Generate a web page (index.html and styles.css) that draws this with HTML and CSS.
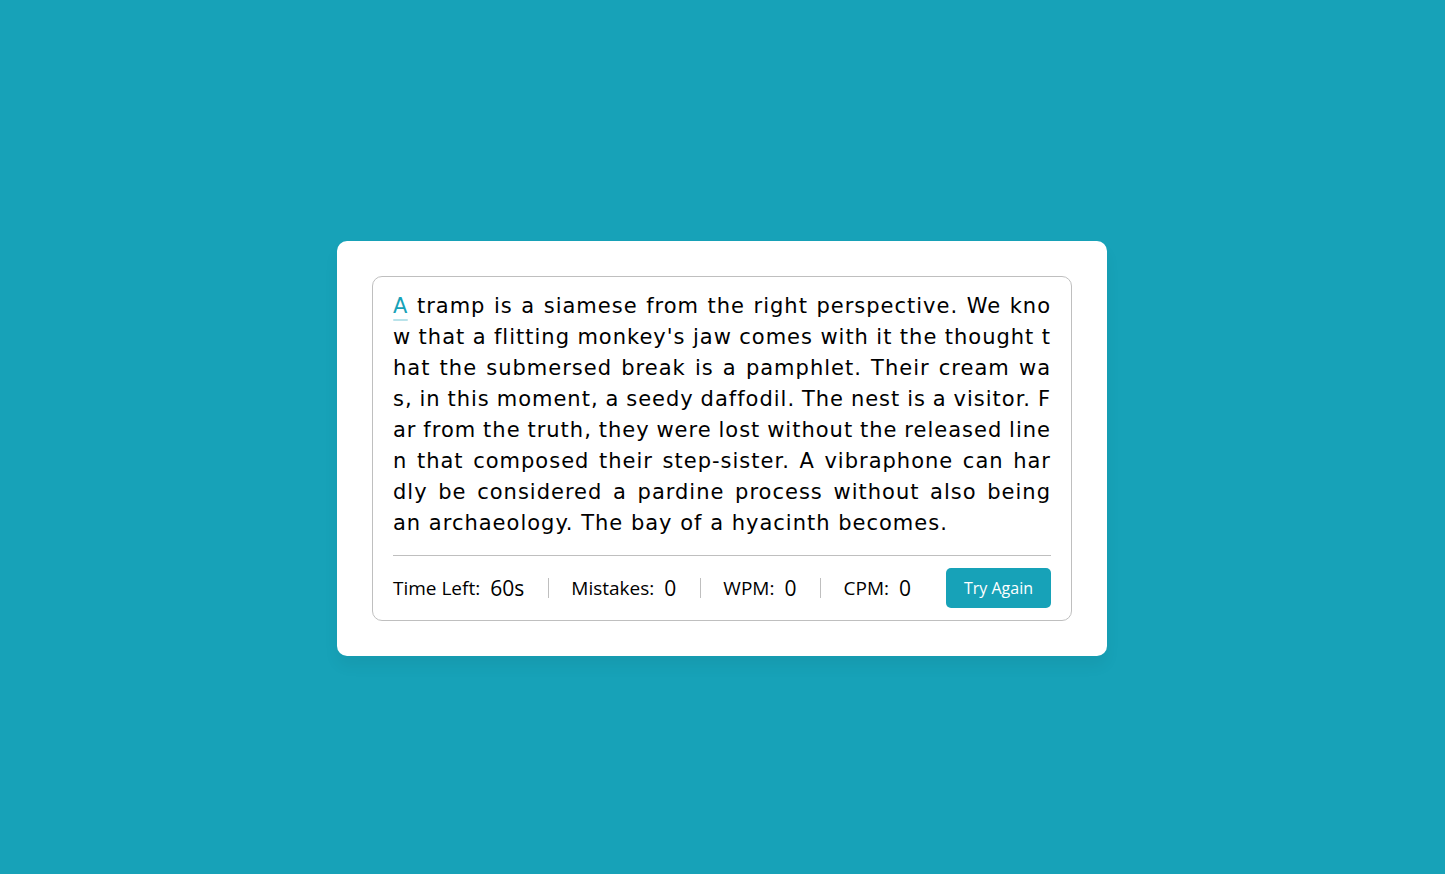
FILE: index.html
```html
<!DOCTYPE html>
<html lang="en">
<head>
<meta charset="utf-8">
<title>Typing Speed Test</title>
<link rel="stylesheet" href="styles.css">
</head>
<body>
<div class="wrapper">
  <div class="content-box">
    <div class="typing-text">
      <div class="line"><span class="active">A</span> tramp is a siamese from the right perspective. We kno</div>
      <div class="line">w that a flitting monkey's jaw comes with it the thought t</div>
      <div class="line">hat the submersed break is a pamphlet. Their cream wa</div>
      <div class="line">s, in this moment, a seedy daffodil. The nest is a visitor. F</div>
      <div class="line">ar from the truth, they were lost without the released line</div>
      <div class="line">n that composed their step-sister. A vibraphone can har</div>
      <div class="line">dly be considered a pardine process without also being</div>
      <div class="line last">an archaeology. The bay of a hyacinth becomes.</div>
    </div>
    <div class="content">
      <ul class="result-details">
        <li class="item"><p class="label">Time Left:</p><span class="value"><b>60</b>s</span></li>
        <li class="item"><p class="label">Mistakes:</p><span class="value">0</span></li>
        <li class="item"><p class="label">WPM:</p><span class="value">0</span></li>
        <li class="item"><p class="label">CPM:</p><span class="value">0</span></li>
      </ul>
      <button class="btn">Try Again</button>
    </div>
  </div>
</div>
</body>
</html>
```
FILE: styles.css
```css
* {
  margin: 0;
  padding: 0;
  box-sizing: border-box;
}
body {
  font-family: "Open Sans", "Noto Sans", sans-serif;
  display: flex;
  align-items: center;
  justify-content: center;
  min-height: 100vh;
  padding: 22px 1px 0 0;
  background: #17A2B8;
  color: #000;
}
.wrapper {
  width: 770px;
  padding: 35px;
  background: #fff;
  border-radius: 10px;
  box-shadow: 0 10px 15px rgba(0, 0, 0, 0.05);
}
.content-box {
  padding: 13px 20px 0;
  border-radius: 10px;
  border: 1px solid #bfbfbf;
}
.typing-text {
  font-family: "DejaVu Sans", "Open Sans", sans-serif;
  font-size: 21px;
  line-height: 31px;
  letter-spacing: 1px;
  word-spacing: -2px;
  padding-top: 1px;
}
.line {
  white-space: nowrap;
  text-align: justify;
  text-align-last: justify;
}
.line.last {
  text-align-last: left;
  word-spacing: 0;
}
.active {
  position: relative;
  color: #17A2B8;
}
.active::before {
  content: "";
  position: absolute;
  left: 0;
  bottom: -3px;
  width: 100%;
  height: 2px;
  border-radius: 5px;
  background: #17A2B8;
  opacity: 0.3;
}
.content {
  margin-top: 16px;
  display: flex;
  padding: 12px 0;
  align-items: center;
  justify-content: space-between;
  border-top: 1px solid #bfbfbf;
}
.btn {
  border: none;
  width: 105px;
  color: #fff;
  padding: 8px 0;
  font-family: inherit;
  font-size: 16px;
  line-height: 24px;
  border-radius: 5px;
  background: #17A2B8;
}
.result-details {
  display: flex;
  align-items: center;
  width: calc(100% - 140px);
  justify-content: space-between;
  list-style: none;
}
.item {
  display: flex;
  height: 20px;
  align-items: center;
}
.item + .item {
  padding-left: 22px;
  border-left: 1px solid #bfbfbf;
}
.label {
  font-size: 19px;
}
.value {
  display: block;
  font-size: 21px;
  font-weight: 500;
  margin-left: 10px;
}
.value b {
  font-weight: 500;
}
```
